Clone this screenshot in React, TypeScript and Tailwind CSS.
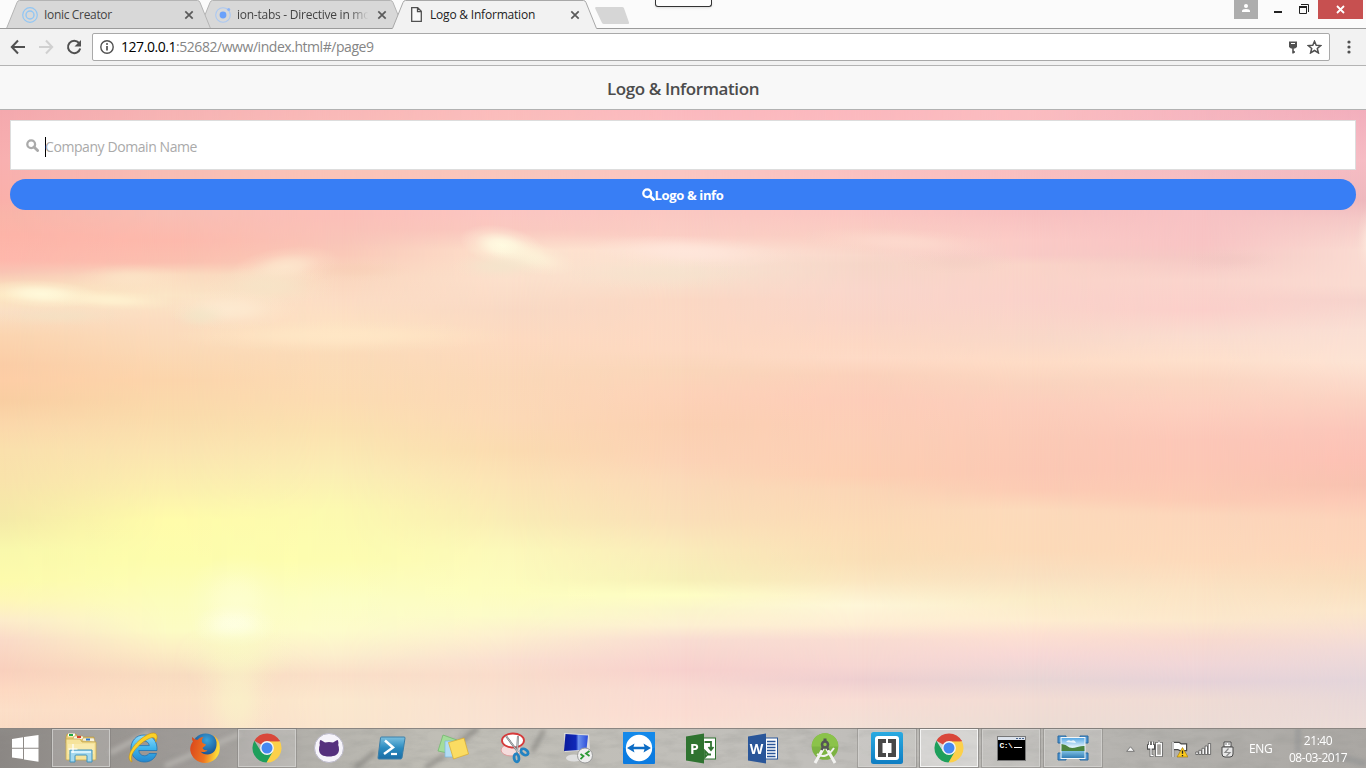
import type { ReactNode } from "react";

type Stop = [number, string];
type Column = { x: number; stops: Stop[] };

const SKY_TOP = 110;
const SKY_HEIGHT = 618;

const parse = (s: string): Stop[] =>
  s.split(" ").map((p) => {
    const [y, c] = p.split(":");
    return [Number(y), "#" + c];
  });

const columns: Column[] = [
  { x: 0, stops: parse("110:f4a9ae 160:f8b0b0 200:fab0aa 215:f9b5a9 235:fdb4a8 260:feb8ac 272:f9c4b4 285:fadcbc 295:fde6c0 312:fadfc4 335:fbd5b0 365:fbcda6 380:fdcea6 400:f9cea2 425:fbd8ab 450:fae0ac 480:f9e3ab 520:f5eaa8 550:f9f8ac 580:fdfbac 600:fef7b8 620:fdeccb 640:fadac8 670:f9d0bd 690:fdd9c2 710:fcdfc8 728:fadcc5") },
  { x: 170, stops: parse("110:f6b3b4 160:f8bdb4 215:f8beb4 240:fdb9ac 262:fbbfaf 275:fbdcc0 295:fbe5c6 320:fbdcc0 345:fbdab8 380:fcd5ab 415:fadbab 450:fbe4b0 490:fcf0ae 520:fffcaa 560:fdfdac 600:fcfdbc 630:fcfcc4 650:fceec4 675:f8dcc0 700:fce0c4 728:fbdcc8") },
  { x: 340, stops: parse("110:f9b8b8 170:fbc4b8 215:fbbfb8 240:f9c4b8 255:fac9b8 275:fad6be 300:fcdcc4 335:fee4c2 355:fbdbb8 400:fcdcb2 430:fbe2b0 470:fbedb4 510:fcf9b0 560:fdfdb0 600:fcfec4 630:fdfccb 655:fceecd 675:fadfc8 700:fbe8ce 728:fae6ce") },
  { x: 510, stops: parse("110:fbbcbc 170:f9c6bc 212:fbc6c2 230:fac9c0 250:fde1cc 280:fce0cc 310:f9d9c4 340:fddac0 380:fbd8b8 420:fcd9b6 450:fbdbb0 480:fce3b5 520:faecb5 550:fcf8ba 590:fdfdbe 615:fcfbc8 635:fdefcf 660:fadfd0 675:f9dccb 700:f9e0d0 728:f9e2d3") },
  { x: 683, stops: parse("110:fbb9bf 170:fbc6c2 212:fac8c2 235:fbcdc4 250:fee2d4 272:f8e3d0 300:fbd8c4 350:fdd9c2 370:fad6ba 395:fdd2b8 425:fbd0b2 460:fcd3b6 480:fbd9b8 520:fadfb8 550:faebba 580:f7f0b8 595:fefec4 610:fbf5cb 625:fdf0d2 640:f9dcd2 670:f7d0cd 690:f9dad2 715:fbdcd2 728:fae0d4") },
  { x: 860, stops: parse("110:fbb8be 212:fbc6c2 240:fad0c4 255:f9d8cb 265:f6d6c8 290:f9d6cb 320:fad5c7 345:fdd8c4 358:fedac6 375:fbd1bb 400:fdcdb9 440:fccfb6 475:fdcfb2 490:fbd6b6 530:fcdcb6 560:fadfb7 580:fbe6c0 605:fef6d8 625:feedd4 640:f9dcd2 665:f6d6d2 680:eecfd0 700:f8dcd4 728:f2e0d6") },
  { x: 1030, stops: parse("110:fbbcc0 212:f7c0c0 240:fbcac6 255:f9cac6 265:fad4c8 300:fad2ca 340:f9d8c8 362:fedcc6 385:fad3be 405:fccebc 440:fbcab6 470:fbc8b4 490:fccbb4 510:fcdabb 550:fcdab8 575:f9e0c0 600:fbecc8 620:feedd0 635:fde0d2 655:f7d8d6 680:e8d5d5 700:f2dcd4 728:ecdcd4") },
  { x: 1200, stops: parse("110:f6b5bf 160:f4bcc2 212:f7c2c4 245:f8c4c4 258:f5c8c4 280:fad4cc 310:fbcfca 335:fadccf 360:fee0cc 380:fbd6c2 410:fdcfbf 440:fcc7b8 470:fcc7b5 500:fccbb4 515:fcd6bb 560:fddabb 590:fbe3c4 620:fce8cc 640:f8dad0 665:f0d6d8 682:e6d2d8 700:efdbd4 728:ecdcd6") },
  { x: 1366, stops: parse("110:f2aebc 160:f6bcc4 200:eeb8bd 218:f4c8c6 250:fadbd2 285:fadbd1 300:f6d3cc 330:fadfd4 362:fde3d4 400:fbd2c2 430:fbc6ba 460:fcc1b4 485:f8c2b0 500:fcc9b6 520:fcd3ba 550:fdd5ba 580:f9ddbc 610:fbe6ca 630:f8e0d2 650:f0dad8 680:e4d5da 700:e8d8d8 728:ecdcd8") },
];

// cx, cy, rx, ry, fill, opacity, rotation
const wisps: [number, number, number, number, string, number, number][] = [
  [503, 246, 44, 20, "#fffce2", 1, 12],
  [532, 258, 44, 16, "#fdf2d8", 0.9, 12],
  [500, 266, 50, 14, "#f3e5cc", 0.8, 0],
  [42, 294, 60, 14, "#fff9da", 1, 3],
  [110, 300, 66, 10, "#fff2d0", 0.9, 3],
  [60, 316, 70, 10, "#f3e2c4", 0.6, 0],
  [130, 278, 56, 14, "#fce6c8", 0.7, 0],
  [285, 267, 56, 20, "#fde9cf", 0.85, -8],
  [268, 286, 66, 20, "#f6e5c8", 0.8, 0],
  [230, 309, 66, 20, "#fdebd2", 0.85, 0],
  [200, 316, 30, 14, "#efe6c8", 0.6, 0],
  [355, 270, 56, 12, "#f6ccb2", 0.4, 0],
  [340, 336, 170, 16, "#ffe7c6", 0.8, 0],
  [690, 252, 100, 16, "#ffe7dc", 0.8, 3],
  [660, 274, 100, 16, "#f5e2cd", 0.6, 0],
  [900, 242, 100, 14, "#fddbcf", 0.8, 3],
  [960, 262, 56, 13, "#f2cdc2", 0.5, 0],
  [1230, 260, 46, 11, "#f0c4c0", 0.4, 0],
  [1370, 240, 14, 34, "#fff0e2", 0.6, 0],
  [236, 600, 50, 46, "#fefed8", 0.6, 0],
  [234, 626, 42, 22, "#ffffe6", 1, 0],
  [236, 652, 60, 40, "#f9fcc2", 0.6, 0],
  [236, 700, 40, 60, "#f9f6c8", 0.6, 0],
];

function Sky() {
  return (
    <svg className="absolute inset-0 block h-full w-full" viewBox={`0 ${SKY_TOP} 1366 ${SKY_HEIGHT}`} preserveAspectRatio="none" aria-hidden="true">
      <defs>
        {columns.map((c, i) => (
          <linearGradient key={i} id={`sky${i}`} gradientUnits="userSpaceOnUse" x1="0" x2="0" y1={SKY_TOP} y2={SKY_TOP + SKY_HEIGHT}>
            {c.stops.map(([y, color]) => (
              <stop key={y} offset={(y - SKY_TOP) / SKY_HEIGHT} stopColor={color} />
            ))}
          </linearGradient>
        ))}
        <linearGradient id="ramp">
          <stop offset="0" stopColor="#fff" stopOpacity="0" />
          <stop offset="1" stopColor="#fff" stopOpacity="1" />
        </linearGradient>
        <mask id="fade" maskContentUnits="objectBoundingBox" x="0" y="0" width="1" height="1" style={{ maskType: "alpha" }}>
          <rect width="1" height="1" fill="url(#ramp)" />
        </mask>
        {wisps.map(([, , , , fill], i) => (
          <radialGradient key={i} id={`wisp${i}`}>
            <stop offset="0" stopColor={fill} />
            <stop offset=".3" stopColor={fill} stopOpacity=".8" />
            <stop offset=".65" stopColor={fill} stopOpacity=".28" />
            <stop offset="1" stopColor={fill} stopOpacity="0" />
          </radialGradient>
        ))}
      </defs>
      {columns.slice(1).map((c, i) => {
        const x = columns[i].x;
        const w = c.x - x;
        return (
          <g key={i}>
            <rect x={x} y={SKY_TOP} width={w} height={SKY_HEIGHT} fill={`url(#sky${i})`} />
            <rect x={x} y={SKY_TOP} width={w} height={SKY_HEIGHT} fill={`url(#sky${i + 1})`} mask="url(#fade)" />
          </g>
        );
      })}
      {wisps.map(([cx, cy, rx, ry, , o, r], i) => (
        <ellipse key={i} cx={cx} cy={cy} rx={rx} ry={ry} fill={`url(#wisp${i})`} opacity={o} transform={`rotate(${r} ${cx} ${cy})`} />
      ))}
    </svg>
  );
}

function TabShape({ fill, active }: { fill: string; active?: boolean }) {
  return (
    <svg className="absolute inset-0" width="205" height="29" viewBox="0 0 205 29" aria-hidden="true">
      <path d="M0 29 L0.5 28.5 L11 2.5 Q11.8 0.5 13.5 0.5 H191.5 Q193.2 0.5 194 2.5 L204.5 28.5 L205 29Z" fill={fill} />
      <path d="M0.5 28.5 L11 2.5 Q11.8 0.5 13.5 0.5 H191.5 Q193.2 0.5 194 2.5 L204.5 28.5" fill="none" stroke={active ? "#a8a8a8" : "#b4b4b4"} />
      {!active && <path d="M0 28.5H205" stroke="#9b9b9b" />}
    </svg>
  );
}

function CloseX() {
  return (
    <svg width="10" height="10" viewBox="0 0 10 10" className="shrink-0" aria-hidden="true">
      <path d="M1.3 1.3L8.7 8.7M8.7 1.3L1.3 8.7" stroke="#5a5a5a" strokeWidth="1.7" />
    </svg>
  );
}

function TaskSlot({ children, state }: { children: ReactNode; state?: "open" | "active" }) {
  const frame =
    state === "active"
      ? "border border-[#f4f4f3] bg-white/40 outline outline-1 outline-[#77757388]"
      : state === "open"
        ? "border border-[#d3d2d0]/80 bg-white/15 outline outline-1 outline-[#77757366]"
        : "border border-transparent";
  return (
    <div className="flex h-10 w-[62px] shrink-0 items-center justify-center">
      <div className={`flex h-[38px] w-[58px] items-center justify-center ${frame}`}>{children}</div>
    </div>
  );
}

function Explorer() {
  return (
    <svg width="34" height="32" viewBox="0 0 34 32">
      <path d="M2 5l1-3h9l2 3h16v6H2z" fill="#e9cc72" stroke="#b7963f" strokeWidth=".6" />
      <rect x="4" y="1.500" width="7" height="3" fill="#fff" /><rect x="5" y="2" width="4" height="2" fill="#20a840" />
      <path d="M9 7l1-3h9l1 3" fill="#f7f3df" stroke="#b7963f" strokeWidth=".5" />
      <rect x="13" y="4" width="4" height="2" fill="#d8402c" />
      <path d="M18 9l1-3h11l1 4z" fill="#f7f3df" stroke="#b7963f" strokeWidth=".5" />
      <rect x="22" y="6.500" width="4" height="2" fill="#3478c8" />
      <path d="M2 7h14l2 3h14v17q0 1-1 1H3q-1 0-1-1z" fill="#f6e39b" stroke="#c9a94e" strokeWidth=".8" />
      <path d="M4 12h26v10H4z" fill="#fbedb5" opacity=".7" />
      <path d="M6 30V18h22v12h-5v-6q0-1-1-1H12q-1 0-1 1v6z" fill="#a4d8ee" stroke="#3f93bd" />
      <path d="M7 19h20v2H7z" fill="#d7f2fb" />
      <path d="M9 12v9M4.500 17h9" stroke="#fff" strokeWidth="1.200" />
    </svg>
  );
}

function InternetExplorer() {
  return (
    <svg width="32" height="32" viewBox="0 0 32 32">
      <defs>
        <linearGradient id="ie" x1="0" y1="0" x2="0" y2="1"><stop offset="0" stopColor="#8fdcfb" /><stop offset=".5" stopColor="#3db4ec" /><stop offset="1" stopColor="#2487cf" /></linearGradient>
      </defs>
      <path d="M17 3C9 3 4 9 4 16.500S9.500 30 17.500 30c6 0 10.500-3.500 12-8.500h-7.500c-1 1.500-2.500 2.300-4.500 2.300-3.500 0-5.500-2.300-5.700-5.300H30C30.500 9 25.500 3 17 3zm-5.200 10.600c.4-2.600 2.500-4.600 5.300-4.600s4.900 2 5.200 4.600z" fill="url(#ie)" stroke="#2075b5" strokeWidth=".8" />
      <path d="M5 30C-1 28 3 17 11 9.500S27-1 29.500 2.500c1.200 1.700.6 4.500-.8 7.500 0-4-2-5.500-6.500-3.500C15 9.500 5 19 4.500 25c-.1 2 0 3.500 .5 5z" fill="#fbd027" stroke="#c28e14" strokeWidth=".6" />
    </svg>
  );
}

function Firefox() {
  return (
    <svg width="32" height="32" viewBox="0 0 32 32">
      <defs>
        <radialGradient id="ffb" cx=".55" cy=".25" r=".7"><stop offset="0" stopColor="#39a3dc" /><stop offset="1" stopColor="#123a7c" /></radialGradient>
        <linearGradient id="ffo" x1="0" y1="0" x2="1" y2=".2"><stop offset="0" stopColor="#d8421c" /><stop offset=".6" stopColor="#ee7420" /><stop offset="1" stopColor="#fddb3a" /></linearGradient>
      </defs>
      <circle cx="16.500" cy="15" r="13.500" fill="url(#ffb)" />
      <path d="M3 5c0 2 .3 3.500 1 4.500C1.500 12.500 1 16 1.300 18.500 2.500 26 8.800 31 16 31c8.500 0 14.700-6.500 14.800-14.500C30.900 10 28.500 5.500 24 3c2.500 3 4 6 3.500 10-.5 6-4 9.500-9 9.500-3.500 0-5.500-1-7-3 3 1 5 .5 7-1-2.500 0-4-.7-5-2.500 1.500-2 3-1.500 3.500-3.500-1.500-1-3.500-1-4-2.500C12.700 8.500 13 6.500 14.500 5c-2.500 0-4.500 1-6 3C6.500 7.500 4.500 6.500 3 5z" fill="url(#ffo)" />
    </svg>
  );
}

function Chrome() {
  return (
    <svg width="30" height="30" viewBox="0 0 30 30">
      <path d="M15 15L2.400 7.700A14.600 14.600 0 0 1 27.800 8z" fill="#d9483b" />
      <path d="M15 15V8.300h12.900A14.600 14.600 0 0 1 15 29.600z" fill="#fcd04a" />
      <path d="M15 15l5.900 3.400L14.500 29.600A14.600 14.600 0 0 1 2.400 7.700L9 18.500z" fill="#1e9f5b" />
      <path d="M15 8.300h12.900l-.6-1.200L15 6z" fill="#d9483b" />
      <circle cx="15" cy="15" r="6.900" fill="#f5f5f5" />
      <circle cx="15" cy="15" r="5.500" fill="#4688f1" />
    </svg>
  );
}

function GitHub() {
  return (
    <svg width="32" height="32" viewBox="0 0 32 32">
      <circle cx="16" cy="16" r="14.500" fill="#f6f4fa" stroke="#b9b7c6" />
      <path d="M7 8.500q.4-.8 1.200-.3L12 10.500q4-1 8 0l3.800-2.300q.8-.5 1.200.3.800 2.500.2 4.500 1 2 .8 5c-.4 4.500-4 6.500-10 6.500S6.400 22.500 6 18q-.2-3 .8-5-.6-2 .2-4.500z" fill="#55307d" />
    </svg>
  );
}

function PowerShell() {
  return (
    <svg width="30" height="26" viewBox="0 0 30 26">
      <defs><linearGradient id="ps" x1="0" y1="0" x2="0" y2="1"><stop offset="0" stopColor="#7cc0df" /><stop offset=".5" stopColor="#2b8bc0" /><stop offset="1" stopColor="#1b6da5" /></linearGradient></defs>
      <path d="M5.500 2H28q1.200 0 1 1.200l-3 19.600Q25.700 24 24.500 24H3q-1.200 0-1-1.200L4.500 3Q4.700 2 5.500 2z" fill="url(#ps)" stroke="#3a7ea8" />
      <path d="M9 5.500l8 7L8 19" fill="none" stroke="#fff" strokeWidth="2.500" />
      <path d="M15 19h6" stroke="#fff" strokeWidth="2.200" />
    </svg>
  );
}

function StickyNotes() {
  return (
    <svg width="34" height="28" viewBox="0 0 34 28">
      <path d="M7 1l14 5-4 14-15-3z" fill="#a4dc9a" stroke="#6ab866" strokeWidth=".7" />
      <path d="M9 7h14v16H9z" fill="#b2dcf4" stroke="#7cb4d8" strokeWidth=".7" />
      <path d="M12.500 8.500L28 4l4.500 16-15 5z" fill="#fbdc62" stroke="#d8a92b" strokeWidth=".7" />
    </svg>
  );
}

function Snipping() {
  return (
    <svg width="32" height="32" viewBox="0 0 32 32">
      <ellipse cx="12" cy="18" rx="10" ry="6" fill="#f5dcdc" stroke="#dc9c9c" strokeWidth="1" />
      <ellipse cx="14" cy="8.500" rx="11" ry="7" fill="#fff" stroke="#d63a3a" strokeWidth="1.800" />
      <path d="M7 4l12 16M19 4l-1 17" stroke="#73777a" strokeWidth="2" />
      <path d="M7 4l12 16M19 4l-1 17" stroke="#d8dcdf" strokeWidth=".7" />
      <ellipse cx="25.500" cy="20" rx="4" ry="2.600" transform="rotate(35 25.500 20)" fill="none" stroke="#2383c2" strokeWidth="2.800" />
      <ellipse cx="17.500" cy="26" rx="2.400" ry="4" transform="rotate(-8 17 26)" fill="none" stroke="#2383c2" strokeWidth="2.800" />
    </svg>
  );
}

function RemoteDesktop() {
  return (
    <svg width="32" height="32" viewBox="0 0 32 32">
      <defs><linearGradient id="rd"><stop offset="0" stopColor="#0a1a9c" /><stop offset=".5" stopColor="#1028b8" /><stop offset=".6" stopColor="#6d92ee" /><stop offset="1" stopColor="#2a4bd8" /></linearGradient></defs>
      <ellipse cx="13" cy="26" rx="8" ry="3.500" fill="#dedede" />
      <path d="M3 1l25 1.500 1 15L4 20z" fill="#dcdcdc" /><path d="M4.500 2l22.500 1.500-1.500 14L3 19z" fill="url(#rd)" />
      <circle cx="24" cy="23.500" r="7.500" fill="#eee" stroke="#999" />
      <path d="M19.500 22l3 2.200-3 3M28.500 19l-3.500 2.500 3.500 2.500" fill="none" stroke="#2c9a35" strokeWidth="1.800" />
    </svg>
  );
}

function TeamViewer() {
  return (
    <svg width="32" height="32" viewBox="0 0 32 32">
      <rect width="32" height="32" rx="1" fill="#0b7be0" /><rect width="32" height="16" rx="1" fill="#1489ea" />
      <circle cx="16" cy="16" r="13.200" fill="#fff" />
      <path d="M4 16l7.500-4.500-1 3.200h11l-1-3.200L28 16l-7.500 4.500 1-3.200h-11l1 3.200z" fill="#0c6cc4" />
    </svg>
  );
}

function OfficeApp({ letter, color, kind }: { letter: string; color: string; kind: "project" | "word" }) {
  return (
    <div className="relative h-[31px] w-[31px]">
      <svg className="absolute inset-0" width="31" height="31" viewBox="0 0 31 31">
        <rect x="17" y="5" width="12.500" height="21" fill="#fff" stroke={color} />
        {kind === "word" ? (
          <path d="M19 8.500h8.500M19 11.500h8.500M19 14.500h8.500M19 17.500h8.500M19 20.500h8.500M19 23.500h8.500" stroke={color} strokeWidth="1.300" />
        ) : (
          <path d="M18.500 9h6.500v7M22.500 14l2.500 3 2.500-3M19 18l3 3-3 3zM22 21.500h3" fill="none" stroke={color} strokeWidth="1.800" />
        )}
        <path d="M0 3.500L18 .5v30L0 27.500z" fill={color} />
      </svg>
      <span className="absolute left-0 top-[7px] w-[18px] text-center text-[14px] font-bold leading-[17px] text-white">{letter}</span>
    </div>
  );
}

function AndroidStudio() {
  return (
    <svg width="30" height="32" viewBox="0 0 30 32">
      <circle cx="15" cy="14.500" r="13.300" fill="#7cb342" /><path d="M1.700 14.500a13.300 13.300 0 0 1 26.600 0z" fill="#8bc34a" />
      <path d="M13.500 16L5 31M16.500 16L25 31" stroke="#f2f2f0" strokeWidth="3" /><path d="M7 22q9 6 17-6" fill="none" stroke="#f2f2f0" strokeWidth="2" />
      <rect x="13.500" y="6.500" width="3" height="4" fill="#555" /><circle cx="15" cy="12.500" r="3" fill="#8bc34a" stroke="#555" strokeWidth="2.600" />
      <path d="M13 15l-1.500 3M17 15l1.500 3" stroke="#555" strokeWidth="2.500" />
    </svg>
  );
}

function Brackets() {
  return (
    <svg width="32" height="32" viewBox="0 0 32 32">
      <defs><linearGradient id="br" x1="0" y1="0" x2="0" y2="1"><stop offset="0" stopColor="#29aae1" /><stop offset="1" stopColor="#0f7dc2" /></linearGradient></defs>
      <rect width="32" height="32" rx="2.500" fill="url(#br)" /><rect x="4" y="4" width="24" height="24" rx="3" fill="#fff" />
      <path d="M7 7h8v4h-3.500v10H15v4H7zM25 7h-8v4h3.500v10H17v4h8z" fill="#484848" />
    </svg>
  );
}

function Terminal() {
  return (
    <div className="relative flex h-[25px] w-[29px] flex-col border border-[#777] bg-black">
      <div className="flex h-[3px] justify-end gap-px bg-[#dce3ec] pr-px pt-px">
        <i className="h-px w-[2px] bg-[#45618c]" /><i className="h-px w-[2px] bg-[#45618c]" /><i className="h-px w-[2px] bg-[#45618c]" />
      </div>
      <span className="pl-[2px] pt-px font-['Liberation_Mono',monospace] text-[8px] font-bold leading-[9px] tracking-[-0.6px] text-white">C:\</span>
      <i className="absolute left-[16px] top-[10px] h-px w-[8px] bg-white" />
    </div>
  );
}

function Photo() {
  return (
    <svg width="32" height="28" viewBox="0 0 32 28">
      <defs><linearGradient id="ph" x1="0" y1="0" x2="0" y2="1"><stop offset="0" stopColor="#4fa4e4" /><stop offset=".45" stopColor="#e4f3fb" /><stop offset=".65" stopColor="#7cbde2" /><stop offset="1" stopColor="#2d78b0" /></linearGradient></defs>
      <path d="M1 2h8v7H1zM23 2h8v7h-8zM1 19h8v7H1zM23 19h8v7h-8z" fill="#4e94d0" stroke="#2768a0" />
      <rect x="4" y="3.500" width="24" height="21" fill="url(#ph)" stroke="#f4f7f8" />
      <path d="M4.500 10q4 0 8 3.500 3 1 8-.5t7-1v5h-23z" fill="#4b8440" />
      <path d="M9 8q2-3 5-1 4-2 5 2z" fill="#fff" opacity=".8" />
    </svg>
  );
}

function Magnifier({ size, color }: { size: number; color: string }) {
  return (
    <svg width={size} height={size} viewBox="0 0 13 13" className="shrink-0" aria-hidden="true">
      <circle cx="5.200" cy="5.200" r="3.900" fill="none" stroke={color} strokeWidth="2.300" />
      <path d="M8 8l3.600 3.600" stroke={color} strokeWidth="2.800" strokeLinecap="round" />
    </svg>
  );
}

export default function App() {
  return (
    <div className="flex h-[768px] w-[1366px] flex-col overflow-hidden bg-white font-['Open_Sans','Noto_Sans',sans-serif]">
      {/* Tab strip */}
      <header className="relative flex h-[29px] shrink-0 border-b border-[#9b9b9b] bg-[#fbfbfb] pl-[6px]">
        <div className="relative z-10 flex h-[29px] w-[205px] shrink-0">
          <TabShape fill="#d8d8d8" />
          <div className="relative flex h-[29px] w-full items-center pl-4 pr-[17px]">
            <svg width="16" height="16" viewBox="0 0 16 16"><circle cx="8" cy="8" r="7.300" fill="none" stroke="#91c6f4" strokeWidth="1.200" /><circle cx="8" cy="8" r="4" fill="none" stroke="#91c6f4" strokeWidth="1.400" /></svg>
            <span className="ml-[6px] flex-1 whitespace-nowrap text-[12px] leading-4 tracking-[-0.33px] text-[#444]">Ionic Creator</span>
            <CloseX />
          </div>
        </div>
        <div className="relative -ml-3 flex h-[29px] w-[205px] shrink-0">
          <TabShape fill="#d8d8d8" />
          <div className="relative flex h-[29px] w-full items-center pl-4 pr-[17px]">
            <svg width="16" height="16" viewBox="0 0 16 16"><circle cx="8" cy="8" r="7.300" fill="none" stroke="#abc8f2" strokeWidth="1.100" /><circle cx="8" cy="8" r="3.400" fill="#6aa1fb" /><circle cx="13.700" cy="2.500" r="1.500" fill="#8db5f7" /></svg>
            <span className="ml-[6px] mr-[6px] flex-1 whitespace-nowrap text-[12px] leading-4 tracking-[-0.25px] text-[#444] [mask-image:linear-gradient(90deg,#000_84%,transparent_98%)]">ion-tabs - Directive in mo</span>
            <CloseX />
          </div>
        </div>
        <div className="relative z-10 -ml-3 flex h-[29px] w-[205px] shrink-0">
          <TabShape fill="#f2f2f2" active />
          <div className="relative flex h-[29px] w-full items-center pl-[19px] pr-[17px]">
            <svg width="11" height="15" viewBox="0 0 11 15"><path d="M.7.700h6l3.600 3.600v10H.7zM6.500.700v4h4" fill="#fafafa" stroke="#505050" strokeWidth="1.300" /></svg>
            <span className="ml-2 flex-1 whitespace-nowrap text-[12px] leading-4 tracking-[-0.2px] text-[#222]">Logo &amp; Information</span>
            <CloseX />
          </div>
        </div>
        <svg className="-ml-[4px] mt-[6px]" width="38" height="20" viewBox="0 0 38 20"><path d="M3 1H29q1.500 0 2 1.300L36 16.500q.4 1.500-1 1.500H11q-1.500 0-2.200-1.500L2.200 2.500Q1.700 1 3 1z" fill="#d6d6d6" /></svg>
        <div className="ml-[24px] h-[7px] w-[57px] rounded-b-[3px] border border-t-0 border-[#333] bg-[#fdfdfd] shadow-sm" />
        <div className="ml-auto flex h-[19px] pr-[3px]">
          <div className="flex w-6 justify-center bg-[#adadad]">
            <svg width="10" height="19" viewBox="0 0 10 19"><circle cx="5" cy="6" r="2" fill="#fff" /><path d="M1 12V11q0-2 4-2t4 2v1z" fill="#fff" /></svg>
          </div>
          <svg className="ml-4" width="8" height="19"><rect y="11" width="8" height="2" fill="#222" /></svg>
          <svg className="ml-[17px]" width="10" height="19" viewBox="0 0 10 19"><path d="M2 4.500h7.500V12" fill="none" stroke="#222" /><path d="M.5 6.500h7v7h-7z" fill="none" stroke="#222" /><path d="M0 7h8" stroke="#222" strokeWidth="2" /></svg>
          <div className="ml-[9px] flex w-[45px] justify-center bg-[#c75050]">
            <svg width="9" height="19" viewBox="0 0 9 19"><path d="M1 6l7 7M8 6l-7 7" stroke="#fff" strokeWidth="1.800" /></svg>
          </div>
        </div>
      </header>

      {/* Toolbar */}
      <div className="flex h-[37px] shrink-0 items-center border-b border-[#b4b4b4] bg-[#f2f2f2] pl-[10px]">
        <svg width="16" height="16" viewBox="0 0 16 16"><path d="M8 1.500L1.800 8 8 14.500M2 8h13" fill="none" stroke="#505050" strokeWidth="2" /></svg>
        <svg className="ml-3" width="16" height="16" viewBox="0 0 16 16"><path d="M8 1.500L14.200 8 8 14.500M14 8H1" fill="none" stroke="#d0d0d0" strokeWidth="2" /></svg>
        <svg className="ml-3" width="16" height="16" viewBox="0 0 16 16"><path d="M13 4A6.200 6.200 0 1 0 14.200 9.500" fill="none" stroke="#505050" strokeWidth="2" /><path d="M15 1v6.500H8.500z" fill="#505050" /></svg>
        <div className="ml-[10px] flex h-7 w-[1238px] items-center rounded-[2px] border border-[#a9a9a9] bg-white pl-[7px] pr-[7px]">
          <svg width="14" height="14" viewBox="0 0 14 14"><circle cx="7" cy="7" r="6.200" fill="none" stroke="#505050" strokeWidth="1.400" /><path d="M7 6v4.500" stroke="#505050" strokeWidth="1.700" /><circle cx="7" cy="4" r="1" fill="#505050" /></svg>
          <span className="ml-[7px] whitespace-nowrap text-[14px] leading-5 tracking-[-0.45px] text-[#858585]"><span className="text-black">127.0.0.1</span>:52682/www/index.html#/page9</span>
          <svg className="ml-auto" width="10" height="14" viewBox="0 0 10 14"><path d="M1 1.500h8V7L7 8.500H3L1 7z" fill="#505050" /><path d="M3 3.500h4" stroke="#fff" /><path d="M5 8v5.500M6 11v2" stroke="#505050" strokeWidth="1.600" /></svg>
          <svg className="ml-[9px]" width="15" height="14" viewBox="0 0 15 14"><path d="M7.500 1.300l1.700 4 4.500.3-3.400 2.900 1.100 4.400-3.900-2.400-3.900 2.400 1.100-4.400-3.400-2.900 4.500-.3z" fill="none" stroke="#505050" strokeWidth="1.500" /></svg>
        </div>
        <svg className="ml-[17px]" width="4" height="14" viewBox="0 0 4 14"><circle cx="2" cy="2" r="1.600" fill="#505050" /><circle cx="2" cy="7" r="1.600" fill="#505050" /><circle cx="2" cy="12" r="1.600" fill="#505050" /></svg>
      </div>

      {/* Page header */}
      <div className="flex h-11 shrink-0 items-center justify-center border-b border-[#b2b2b2] bg-[#f8f8f8] pt-[3px]">
        <h1 className="whitespace-nowrap text-[17px] font-semibold leading-6 tracking-[-0.4px] text-[#4c4c4c]">Logo &amp; Information</h1>
      </div>

      {/* Page content */}
      <main className="relative h-[618px] shrink-0 overflow-hidden">
        <Sky />
        <div className="relative flex flex-col gap-[9px] p-[10px]">
          <label className="flex h-[50px] items-center border border-[#ddd] bg-white pl-[15px]">
            <Magnifier size={13} color="#aaa" />
            <span className="ml-[6px] mt-[3px] flex h-5 items-center border-l border-black text-[14px] leading-5 tracking-[-0.42px] text-[#aaa]"><span className="-ml-px">Company Domain Name</span></span>
          </label>
          <button className="flex h-[31px] items-center justify-center rounded-[16px] bg-[#387ef5] text-[13px] font-bold leading-5 tracking-[-0.35px] text-white">
            <Magnifier size={13} color="#fff" />
            <span className="-ml-px mt-px">Logo &amp; info</span>
          </button>
        </div>
      </main>

      {/* Taskbar */}
      <footer className="relative flex h-10 shrink-0 overflow-hidden bg-[#b5b3af] text-white">
        <svg className="absolute inset-0" width="1366" height="40" viewBox="0 0 1366 40" aria-hidden="true">
          <defs>
            <linearGradient id="stone"><stop offset="0" stopColor="#8b8784" /><stop offset=".07" stopColor="#989490" /><stop offset=".15" stopColor="#a09c99" /><stop offset=".23" stopColor="#b4b2ac" /><stop offset=".32" stopColor="#c0beb6" /><stop offset=".6" stopColor="#c1bfbb" /><stop offset=".85" stopColor="#b4b2ae" /><stop offset="1" stopColor="#aaa7a3" /></linearGradient>
            <filter id="grain" x="0" y="0" width="100%" height="100%"><feTurbulence type="fractalNoise" baseFrequency=".04 .12" numOctaves="4" seed="4" /><feColorMatrix values="0 0 0 0 .3  0 0 0 0 .3  0 0 0 0 .28  1.300 0 0 0 -.5" /></filter>
            <filter id="vein"><feGaussianBlur stdDeviation="2" /></filter>
          </defs>
          <rect width="1366" height="40" fill="url(#stone)" />
          <rect width="1366" height="40" filter="url(#grain)" opacity=".45" />
          <g filter="url(#vein)" fill="none" strokeWidth="5">
            <path d="M110 25L150 4M165 38L240 6" stroke="#bebbb7" opacity=".7" />
            <path d="M355 40L375 24M450 22L478 0M532 24L544 2M425 40L445 27" stroke="#817e7b" opacity=".6" />
            <path d="M1298 0v24M1330 26l36 10" stroke="#888b8e" opacity=".5" />
          </g>
          <path d="M0 .5H1366" stroke="#8b8682" />
        </svg>
        <div className="relative flex w-[50px] shrink-0 items-center pl-3">
          <svg width="27" height="27" viewBox="0 0 27 27"><path d="M0 4l11-1.700v10.400H0zM12 2.100L26.500 0v12.700H12zM0 13.700h11v10.400L0 22.500zM12 13.700h14.500v13L12 24.500z" fill="#fff" /></svg>
        </div>
        <nav className="relative flex">
          <TaskSlot state="open"><Explorer /></TaskSlot>
          <TaskSlot><InternetExplorer /></TaskSlot>
          <TaskSlot><Firefox /></TaskSlot>
          <TaskSlot state="open"><Chrome /></TaskSlot>
          <TaskSlot><GitHub /></TaskSlot>
          <TaskSlot><PowerShell /></TaskSlot>
          <TaskSlot><StickyNotes /></TaskSlot>
          <TaskSlot><Snipping /></TaskSlot>
          <TaskSlot><RemoteDesktop /></TaskSlot>
          <TaskSlot><TeamViewer /></TaskSlot>
          <TaskSlot><OfficeApp letter="P" color="#2f7330" kind="project" /></TaskSlot>
          <TaskSlot><OfficeApp letter="W" color="#2a5699" kind="word" /></TaskSlot>
          <TaskSlot><AndroidStudio /></TaskSlot>
          <TaskSlot state="open"><Brackets /></TaskSlot>
          <TaskSlot state="active"><Chrome /></TaskSlot>
          <TaskSlot state="open"><Terminal /></TaskSlot>
          <TaskSlot state="open"><Photo /></TaskSlot>
        </nav>
        <div className="relative flex flex-1 items-center pl-[22px] pt-[2px]">
          <svg width="9" height="6" viewBox="0 0 9 6"><path d="M.7 5.300L4.500.800l3.800 4.500z" fill="#fff" stroke="#555" strokeWidth=".7" /></svg>
          <svg className="ml-3" width="17" height="18" viewBox="0 0 17 18"><path d="M2.500 1.500v4M5.500 1.500v4M1 5.500h6v3H1zM4 8v7.500h2.500M9.500 3.500h5v12h-5zM11 2h2" stroke="#484848" strokeWidth="2.600" fill="none" /><path d="M9.500 3.500h5v12h-5z" fill="#a5a39f" stroke="#fff" strokeWidth="1.300" /><path d="M11 2.200h2M2.500 1.500v4M5.500 1.500v4M4 8v7.500h2.500" fill="none" stroke="#fff" strokeWidth="1.300" /><path d="M1 5h6v3.500H1z" fill="#fff" /></svg>
          <svg className="ml-[7px]" width="17" height="17" viewBox="0 0 17 17"><path d="M2 1v15M3 2h5l2 1.500h5V9H9L7 8H3z" stroke="#484848" strokeWidth="2.400" fill="#484848" /><path d="M2 1v15" stroke="#fff" strokeWidth="1.400" /><path d="M3 2h5l2 1.500h5V9H9L7 8H3z" fill="#fff" /><path d="M11.500 6.500L17 16H6z" fill="#fbc91b" stroke="#9b7407" strokeWidth=".6" /><path d="M11.500 9.500v3.300M11.500 14v1.200" stroke="#222" strokeWidth="1.300" /></svg>
          <svg className="ml-[7px]" width="17" height="14" viewBox="0 0 17 14"><path d="M.8 10h2.400v2.500H.8zM3.900 8.300h2.400v4.200H3.900zM7 6.300h2.400v6.200H7zM10.100 4h2.400v8.500h-2.400zM13.200 1.500h2.400v11h-2.400z" fill="#fff" stroke="#484848" strokeWidth=".7" /></svg>
          <svg className="ml-[9px]" width="13" height="17" viewBox="0 0 13 17"><path d="M3 1h7v5H3z" fill="#fff" stroke="#484848" /><path d="M1 6h11v7q0 3-3 3H4q-3 0-3-3z" fill="#e8e8e8" stroke="#484848" /><path d="M4.500 3h1M7.500 3h1" stroke="#484848" strokeWidth="1.500" /><path d="M7.500 7.500L4 11.500h5L5.500 15" fill="none" stroke="#8b8b8b" strokeWidth="1.200" /></svg>
          <span className="ml-[15px] text-[12px] leading-4 tracking-[-0.4px]">ENG</span>
          <div className="ml-auto mr-[18px] flex w-[60px] flex-col items-center whitespace-nowrap text-[12px] leading-[17px] tracking-[-0.45px]">
            <span>21:40</span>
            <span>08-03-2017</span>
          </div>
        </div>
      </footer>
    </div>
  );
}
